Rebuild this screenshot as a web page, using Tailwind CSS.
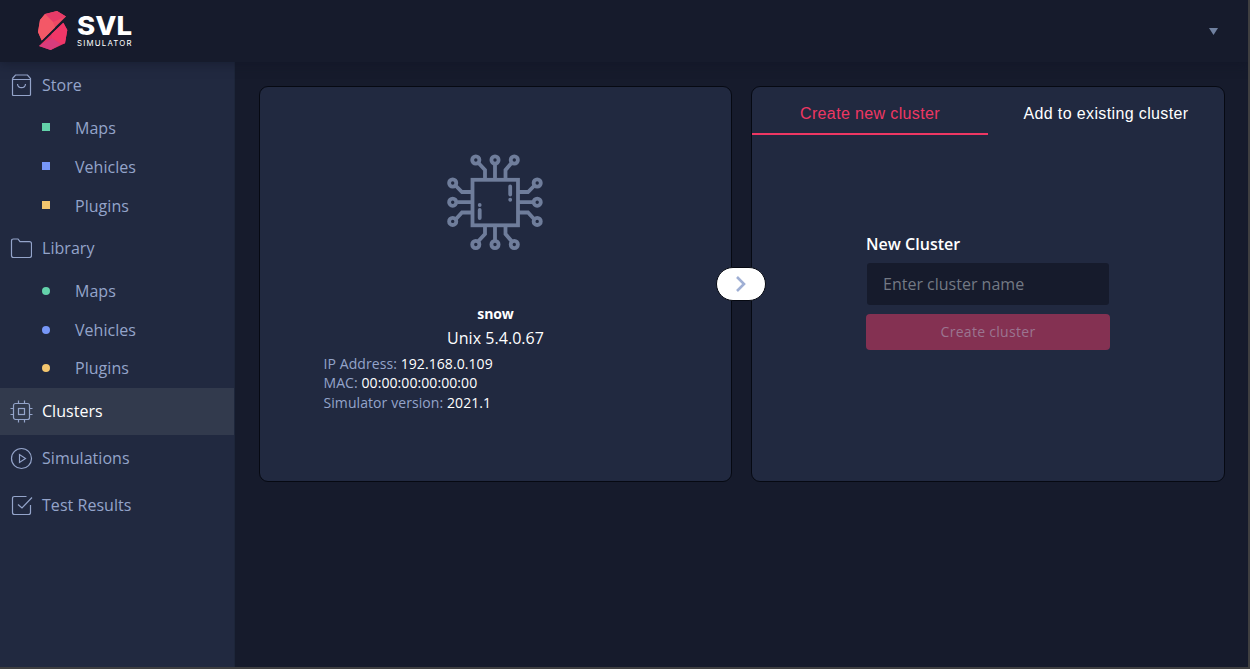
<!DOCTYPE html>
<html lang="en">
<head>
<meta charset="utf-8">
<title>SVL Simulator</title>
<script src="https://cdn.jsdelivr.net/npm/@tailwindcss/browser@4"></script>
</head>
<body class="h-[669px] w-[1250px] overflow-hidden bg-[#3f3f40] pr-[2px] pb-[2px] font-['Open_Sans',sans-serif] text-[#94a4ca]">
<div class="flex h-full flex-col overflow-hidden bg-[#161b2c]">
  <header class="relative z-10 flex h-[62.4px] shrink-0 items-center justify-between bg-[#161b2c] pr-[30.5px] pl-[37px] shadow-[0_2px_10px_rgba(15,20,35,0.5)]">
    <svg width="100" height="46" viewBox="0 0 100 46" role="img" aria-label="SVL Simulator">
      <path d="M8 6L20 3L29 8.500L4.700 32.500L1 24L3 12Z" fill="#ef4964"/>
      <path d="M8 6L20 3L29 8.500L16 14Z" fill="#e73b68"/>
      <path d="M3 12L8 6L16 14L18 19.500L4.700 32.500L1 24Z" fill="#f35867"/>
      <path d="M26.300 14.700L30.300 22L28 35.300L13.700 42L2 38Z" fill="#e83567"/>
      <path d="M2 38L15 30L24 36L13.700 42Z" fill="#d93c7c"/>
      <path d="M26.300 14.700L30.300 22L28 35.300L24 36L15 30L14.500 26Z" fill="#f03768"/>
      <text x="40" y="27.4" textLength="55" lengthAdjust="spacingAndGlyphs" font-family="Inter, sans-serif" font-weight="800" font-size="26" fill="#fff">SVL</text>
      <text x="40" y="37.6" textLength="54.5" lengthAdjust="spacing" font-family="Inter, sans-serif" font-weight="400" font-size="7.800" fill="#fff">SIMULATOR</text>
    </svg>
    <svg width="9" height="7" viewBox="0 0 9 7"><path d="M0 0H9L4.5 7Z" fill="#7081a0"/></svg>
  </header>
  <div class="flex min-h-0 grow">
    <nav class="w-[235px] shrink-0 border-r border-[#1d263a] bg-[#212940] text-[16px] tracking-[0.04px]">
      <div class="flex h-[46.7px] items-center gap-[10px] pb-px pl-[10px]">
        <svg width="22" height="24" viewBox="0 0 22 24" fill="none" stroke="currentColor" stroke-width="1.2"><path d="M2.5 5.5L5.5 2H17.5L20.5 5.5V21.5Q20.5 22.5 19.5 22.5H3.500Q2.500 22.500 2.500 21.500V5.500M2.500 6.500H20.500M7.500 11Q7.800 14.700 11.500 14.700T15.500 11"/></svg>
        <span>Store</span>
      </div>
      <div class="flex h-[38.7px] items-center gap-[25px] pl-[42px]"><i class="mb-[2px] size-2 bg-[#63d2aa]"></i><span>Maps</span></div>
      <div class="flex h-[38.7px] items-center gap-[25px] pl-[42px]"><i class="mb-[2px] size-2 bg-[#7797f8]"></i><span>Vehicles</span></div>
      <div class="flex h-[38.7px] items-center gap-[25px] pl-[42px]"><i class="mb-[2px] size-2 bg-[#f4c66e]"></i><span>Plugins</span></div>
      <div class="flex h-[46.7px] items-center gap-[10px] pl-[10px]">
        <svg width="22" height="24" viewBox="0 0 22 24" fill="none" stroke="currentColor" stroke-width="1.2"><path d="M1.500 5Q1.500 3 3.500 3H8L10 5.700H19.500Q21.500 5.700 21.500 7.700V19.500Q21.500 21.500 19.500 21.500H3.500Q1.500 21.500 1.500 19.500Z"/></svg>
        <span>Library</span>
      </div>
      <div class="flex h-[38.7px] items-center gap-[25px] pl-[42px]"><i class="size-2 rounded-full bg-[#63d2aa]"></i><span>Maps</span></div>
      <div class="flex h-[38.7px] items-center gap-[25px] pl-[42px]"><i class="size-2 rounded-full bg-[#7797f8]"></i><span>Vehicles</span></div>
      <div class="flex h-[38.7px] items-center gap-[25px] pb-px pl-[42px]"><i class="size-2 rounded-full bg-[#f4c66e]"></i><span>Plugins</span></div>
      <div class="flex h-[46.7px] items-center gap-[10px] bg-[#323a4d] pl-[10px]">
        <svg class="overflow-visible" width="22" height="24" viewBox="0 0 22 24" fill="none" stroke="currentColor" stroke-width="1.2"><rect x="3.500" y="4.500" width="16" height="16" rx="2"/><rect x="8.500" y="9.500" width="6" height="6"/><path d="M8.500 1.500V4.500M14.500 1.500V4.500M8.500 20.500V23.500M14.500 20.500V23.500M.5 9.500H3.500M.5 15.500H3.500M19.500 9.500H22.500M19.500 15.500H22.500"/></svg>
        <span class="text-white">Clusters</span>
      </div>
      <div class="flex h-[46.7px] items-center gap-[10px] pl-[10px]">
        <svg class="overflow-visible" width="22" height="24" viewBox="0 0 22 24" fill="none" stroke="currentColor" stroke-width="1.2"><circle cx="11.500" cy="12.500" r="10"/><path d="M9.500 8.500V16.500L15.500 12.500Z"/></svg>
        <span>Simulations</span>
      </div>
      <div class="flex h-[46.7px] items-center gap-[10px] pl-[10px]">
        <svg class="overflow-visible" width="22" height="24" viewBox="0 0 22 24" fill="none" stroke="currentColor" stroke-width="1.2"><path d="M16.500 3.500H4.500Q2.500 3.500 2.500 5.500V19.500Q2.500 21.500 4.500 21.500H18.500Q20.500 21.500 20.500 19.500V12M8 11.500L12 15L22 4.500"/></svg>
        <span>Test Results</span>
      </div>
    </nav>
    <main class="relative flex grow items-start gap-[19px] pt-[23.6px] pl-[24px]">
      <section class="flex h-[396px] w-[473px] flex-col items-center rounded-[9px] border border-[#060912] bg-[#212940] pt-[65px]">
        <svg class="mr-[2px]" width="100" height="100" viewBox="445 152 100 100" fill="none" stroke="#6f7d9b" stroke-width="3.800">
          <rect x="472.500" y="179.800" width="45.500" height="45.500"/>
          <path d="M495 165V179M478.500 163L485 170V179M511.500 163L505.500 170V179M495 240V226M478.500 241L485 234V226M511.500 241L505.500 234V226M458 202.200H472M456 186L462 192H472M456 219L462 212.500H472M532 202.200H518M534 186L528 192H518M534 219L528 212.500H518"/>
          <g><circle cx="475.800" cy="160" r="3.600"/><circle cx="495" cy="160" r="3.600"/><circle cx="514.300" cy="160" r="3.600"/><circle cx="475.800" cy="244.500" r="3.600"/><circle cx="495" cy="244.500" r="3.600"/><circle cx="514.300" cy="244.500" r="3.600"/><circle cx="452.700" cy="183" r="3.600"/><circle cx="452.700" cy="202.200" r="3.600"/><circle cx="452.700" cy="221.400" r="3.600"/><circle cx="537.200" cy="183" r="3.600"/><circle cx="537.200" cy="202.200" r="3.600"/><circle cx="537.200" cy="221.400" r="3.600"/></g>
          <path stroke-linecap="round" d="M510.200 186.500V194.500M510.200 199.700V199.800M479.700 210V218M479.700 205V205.100"/>
        </svg>
        <div class="mt-[52px] text-[14px]/[20px] font-bold tracking-[-0.1px] text-white">snow</div>
        <div class="mt-[1px] text-[16px]/[26px] tracking-[0.05px] text-white">Unix 5.4.0.67</div>
        <div class="mt-[3px] w-[344px] text-[14px]/[19.3px] tracking-[0.08px]">
          <div class="w-max">IP Address: <span class="text-white">192.168.0.109</span></div>
          <div class="w-max">MAC: <span class="text-white">00:00:00:00:00:00</span></div>
          <div class="w-max">Simulator version: <span class="text-white">2021.1</span></div>
        </div>
      </section>
      <section class="flex h-[396px] w-[474px] flex-col rounded-[9px] border border-[#060912] bg-[#212940]">
        <div class="flex h-[48px] font-['Liberation_Sans',Arial,sans-serif] text-[16px] tracking-[0.37px]">
          <div class="flex flex-1 items-center justify-center border-b-2 border-[#ee3763] pt-[9px] text-[#ee3763]">Create new cluster</div>
          <div class="flex flex-1 items-center justify-center pt-[7px] text-white">Add to existing cluster</div>
        </div>
        <div class="ml-[114px] w-[244px] pt-[97.4px]">
          <div class="text-[16px]/[24px] font-semibold tracking-[0.03px] text-white">New Cluster</div>
          <input class="mt-[7px] ml-px block h-[42px] w-[242px] rounded-[3px] bg-[#161b2c] px-[16px] text-[16px] placeholder:text-[#737984]" placeholder="Enter cluster name">
          <button class="mt-[9px] block h-[36px] w-[244px] rounded-[4px] bg-[#843152] pb-[2px] text-[14px] tracking-[0.3px] text-[#9b7590]">Create cluster</button>
        </div>
      </section>
      <div class="absolute top-[204.6px] left-[481px] flex h-[34px] w-[50px] items-center justify-center rounded-full border border-[#060912] bg-white">
        <svg width="10" height="16" viewBox="0 0 10 16" fill="none" stroke="#9fafd4" stroke-width="2.600"><path d="M1 1L8 8L1 15"/></svg>
      </div>
    </main>
  </div>
</div>
</body>
</html>
